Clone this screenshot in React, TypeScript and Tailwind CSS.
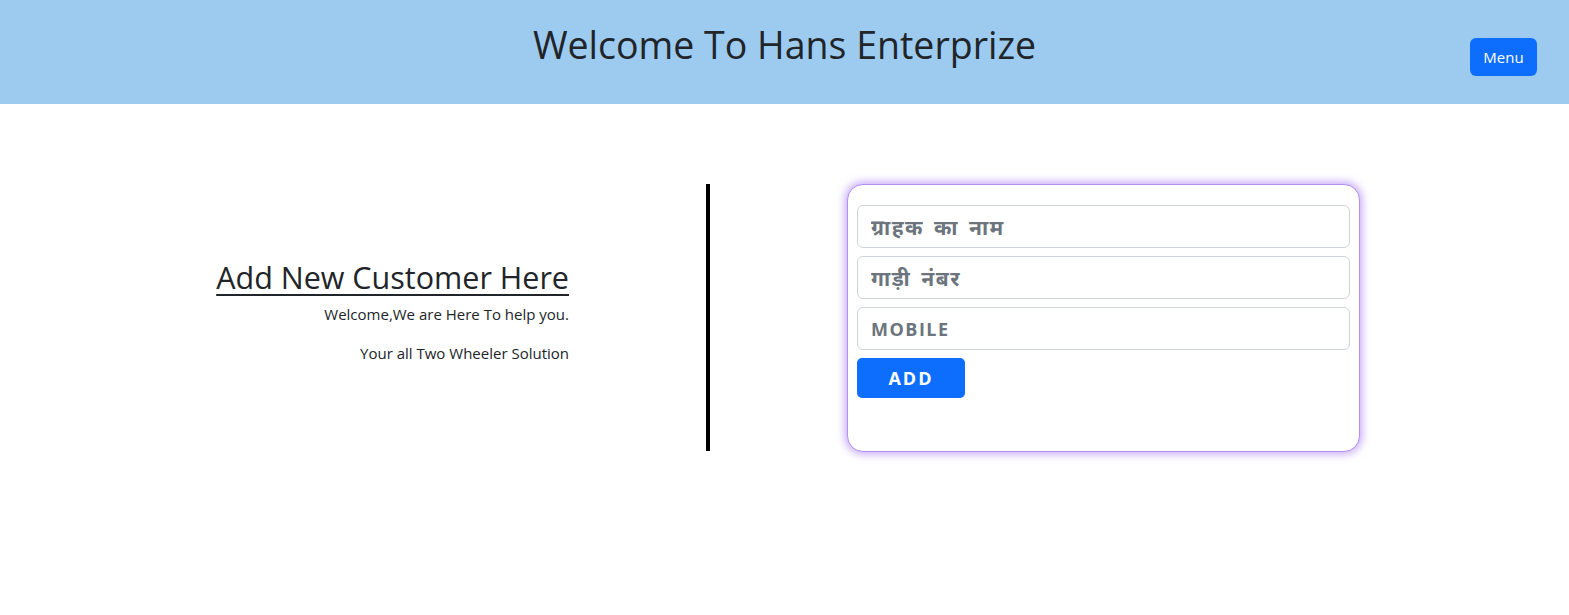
import React from 'react';

const App: React.FC = () => {
    return (
        <div className="min-h-[615px] bg-white font-['Segoe_UI','Open_Sans',sans-serif] text-[#212529]">
            {/* Header */}
            <header className="relative flex h-[104px] justify-center bg-[#9dcbf0]">
                <h1 className="pt-[21px] text-[37.5px] leading-[48px] font-normal">Welcome To Hans Enterprize</h1>
                <button className="absolute right-[32px] top-[38px] h-[38px] w-[67px] rounded-[6px] bg-[#0d6efd] text-[15px] text-white">
                    Menu
                </button>
            </header>

            {/* Body */}
            <div className="mt-[80px] flex items-start">
                {/* Left text */}
                <div className="w-[569px] pt-[75px] text-right">
                    <h2 className="text-[30.5px] leading-[36px] underline underline-offset-[5px] decoration-[2px]">Add New Customer Here</h2>
                    <p className="mt-[8px] text-[15px] leading-[22px]">Welcome,We are Here To help you.</p>
                    <p className="mt-[17px] text-[15px] leading-[22px]">Your all Two Wheeler Solution</p>
                </div>

                {/* Divider */}
                <div className="ml-[137px] h-[267px] w-[4px] bg-black" />

                {/* Form card */}
                <div className="ml-[137px] flex h-[268px] w-[513px] flex-col gap-[8px] rounded-[16px] border border-[#b48ef4] bg-white px-[9px] pt-[20px] shadow-[0_0_9px_2px_rgba(150,95,240,0.55)]">
                    <input
                        placeholder="ग्राहक का नाम"
                        className="h-[43px] w-full rounded-[6px] border border-[#ced4da] px-[13px] text-[21px] font-bold tracking-[1.5px] [word-spacing:3px] placeholder:text-[#6c757d] font-['Noto_Sans','Noto_Sans_Devanagari',sans-serif]"
                    />
                    <input
                        placeholder="गाड़ी नंबर"
                        className="h-[43px] w-full rounded-[6px] border border-[#ced4da] px-[13px] text-[21px] font-bold tracking-[1.5px] [word-spacing:3px] placeholder:text-[#6c757d] font-['Noto_Sans','Noto_Sans_Devanagari',sans-serif]"
                    />
                    <input
                        placeholder="MOBILE"
                        className="h-[43px] w-full rounded-[6px] border border-[#ced4da] px-[13px] text-[18px] font-bold tracking-[1.5px] placeholder:text-[#6c757d] font-['Open_Sans',sans-serif]"
                    />
                    <button className="h-[40px] w-[108px] rounded-[5px] bg-[#0d6efd] text-[18px] font-bold tracking-[2px] text-white font-['Open_Sans',sans-serif]">
                        ADD
                    </button>
                </div>
            </div>
        </div>
    );
};

export default App;
